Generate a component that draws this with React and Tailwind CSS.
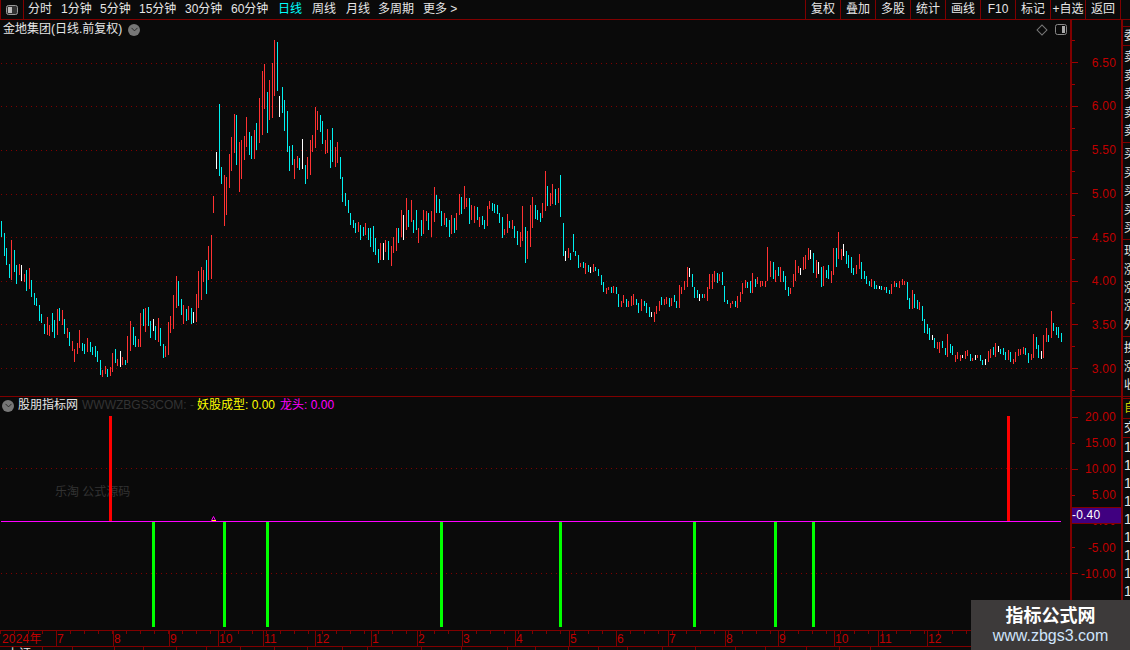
import { ChevronDown } from "lucide-react";

const FONT = "[font-family:'Liberation_Sans','Noto_Sans_CJK_SC',sans-serif]";
const COLORS = { c: "#00f0f0", r: "#ff3232", w: "#ffffff" };

// bars read off the chart in 3x crops: "x,top,bottom,colour"
const CROPS = [
  [0, 215, "3,18,66,c 13,54,123,c 18,99,150,c 28,147,189,c 33,75,195,r 43,105,171,c 48,150,207,c 58,147,180,r 63,150,198,w 73,177,201,r 78,165,228,c 88,159,222,r 93,195,246,c 103,234,270,c 108,249,273,c 118,270,318,c 123,297,324,c 133,327,357,c 142,306,360,r 148,330,363,r 157,294,351,c 163,315,369,c 172,282,360,r 178,279,318,c 187,285,330,r 193,312,357,c 202,339,369,r 208,351,393,c 217,378,408,r 223,402,441,r 232,384,417,r 238,345,399,r 247,384,408,c 253,387,417,c 262,369,411,r 271,381,411,c 277,396,420,c 286,393,426,c 292,408,441,c 301,435,480,c 307,465,486,r 316,453,477,r 322,462,486,c 331,456,483,r 337,414,471,r 346,402,444,c 352,432,453,r 361,408,456,w 367,426,450,r 376,435,450,c 382,363,444,r 391,318,408,r 400,336,390,c 406,363,396,c 415,372,396,r 421,294,396,r 430,282,333,c 436,279,351,r 445,276,333,c 451,318,369,c 460,312,348,w 466,333,375,c 475,309,381,r 481,339,393,c 490,387,429,c 496,393,426,r 505,321,420,r 511,303,354,r 520,240,342,r 529,183,279,r 535,198,273,c 544,252,300,c 550,270,327,r 559,282,318,c 565,273,315,r 574,279,327,c 580,291,324,w 589,237,321,r 595,168,279,r 604,156,255,r 610,165,201,r 619,135,237,c 625,93,195,r 634,60,192,r"],
  [200, 35, "40,483,534,r 49,351,402,w 58,207,423,c 64,396,447,c 73,420,573,r 79,426,540,r 88,357,459,r 94,306,408,r 103,237,354,r 109,240,390,c 118,321,471,r 124,315,432,r 133,303,375,r 139,246,336,r 148,291,360,c 154,303,372,c 163,285,372,r 169,264,345,c 178,189,324,r 187,108,300,r 193,87,222,r 202,171,294,c 208,135,255,r 217,84,249,r 223,15,183,r 232,21,168,c 238,183,246,w 247,156,234,c 253,195,288,c 262,228,351,c 268,333,408,c 277,330,390,c 283,372,432,r 292,363,399,r 298,369,405,c 307,312,402,w 316,390,447,c 322,366,432,r 331,315,420,r 337,300,351,r 346,216,339,r 352,228,285,r 361,240,291,c 367,258,327,c 376,315,357,r 382,282,354,r 391,315,399,c 397,279,381,c 406,336,396,r 412,321,384,r 421,366,432,c 427,426,501,c 436,474,513,c 445,495,534,c 451,534,570,c 460,555,579,c 466,564,594,c 475,561,591,r"],
  [240, 165, "361,180,225,c 370,186,213,c 376,174,210,r 385,189,225,c 391,189,246,c 400,183,261,c 406,219,270,c 415,252,294,c 421,234,285,r 430,234,285,w 436,225,261,r 445,228,285,c 454,243,303,r 460,216,264,r 469,189,258,r 475,189,234,c 484,135,216,r 490,150,225,w 499,99,195,r 505,135,186,c 514,105,171,r 520,165,204,c 529,135,195,c 535,189,234,r 544,165,213,c 550,135,207,r 559,138,168,r 565,144,195,c 574,138,216,r 583,66,171,r 589,90,144,c 598,102,144,c 604,138,183,c 613,144,180,r 619,159,186,c 628,165,216,c 634,150,207,r 643,159,204,c 649,144,195,r 658,87,150,r 664,96,147,c 673,63,132,r 679,99,126,r 688,99,177,c 694,120,165,r 703,123,174,r 712,126,165,c 718,156,186,r 727,153,180,c 733,165,192,c 742,123,183,r 748,108,132,r 757,114,138,c 763,117,144,c 772,120,147,c 778,144,174,c 787,156,219,c 793,192,210,r 802,147,204,r 808,168,189,c 817,165,192,r 823,183,219,c 832,198,240,c 841,201,246,r 847,123,228,r 856,186,294,c 862,198,282,r 871,120,246,r 877,96,189,r 886,120,162,c 892,135,165,c 901,144,171,c 907,114,159,r 916,18,138,r 922,63,123,c 931,84,123,r 937,57,117,r 946,72,120,c 955,69,114,r 961,30,156,c 970,174,273,c 976,258,288,w 985,249,279,r"],
  [555, 220, "46,99,120,c 55,42,96,c 61,93,108,c 70,105,144,c 76,129,141,r 85,126,144,c 91,129,162,r 100,135,156,c 106,141,159,w 115,132,156,r 121,141,153,c 130,147,168,c 139,165,195,c 145,186,216,c 154,204,222,r 160,201,210,r 169,201,219,c 175,198,219,r 184,201,222,c 190,222,261,c 199,243,261,r 205,225,249,r 214,237,261,c 220,243,261,r 229,228,258,r 235,222,255,r 244,237,255,c 250,249,279,c 259,237,273,r 268,243,258,c 274,249,279,c 283,261,291,c 289,276,291,w 298,276,306,r 304,258,282,r 313,243,273,r 319,231,255,c 328,237,255,r 334,231,252,r 343,234,261,c 349,234,258,r 358,225,246,c 364,243,264,c 373,195,264,r 379,201,222,r 388,183,210,r 397,141,201,r 403,144,171,w 412,162,201,c 418,201,234,c 427,210,234,c 433,222,243,w 442,222,234,c 448,222,234,r 457,201,243,r 463,162,207,r 472,162,207,r 478,153,186,r 487,159,189,c 493,162,183,r 502,156,195,c 508,198,246,c 517,240,252,c 526,249,264,r 532,243,252,r 541,243,261,c 547,228,264,r 556,216,246,r 562,189,222,r 571,180,204,r 577,186,204,c 586,183,219,c 592,159,219,r 601,177,201,c 607,171,192,r 616,183,201,r 622,183,198,r 631,183,201,r 637,81,183,r 646,123,171,r 655,126,177,c 661,150,186,r 670,141,168,c 676,141,186,r 685,153,186,c 691,168,210,c 700,201,228,c 706,204,222,r 715,162,201,r 721,120,183,r 730,138,159,r 736,144,165,w 745,111,150,r 751,105,147,r 760,84,120,r 766,90,117,w 775,99,159,c"],
  [800, 225, "49,105,159,r 55,111,147,w 64,126,186,c 70,123,183,r 79,135,159,c 85,120,162,c 94,138,174,r 100,69,150,r 109,69,126,c 115,21,102,r 124,72,105,r 130,57,93,w 139,78,117,c 145,90,129,c 154,96,144,c 160,129,150,c 169,120,147,r 178,87,132,r 184,111,162,c 193,138,162,c 199,153,177,c 208,168,183,c 214,162,186,r 223,168,192,c 229,180,192,c 238,183,192,w 244,183,195,c 253,186,195,r 259,186,204,c 268,195,207,c 274,177,207,r 283,168,186,r 289,174,186,c 298,168,189,r 307,162,180,r 313,168,180,r 322,171,225,c 328,219,252,c 337,195,252,r 343,207,249,c 352,225,252,c 358,231,255,r 367,243,288,c 373,282,324,c 382,297,327,c 388,309,345,c 397,330,345,w 403,339,369,c 412,351,372,r 418,351,384,r 427,348,369,c 436,369,390,c 442,327,396,r 451,357,384,c 457,363,390,c 466,390,411,r 472,381,402,r 481,390,408,r 487,390,399,w 496,378,402,r 502,375,393,r 511,387,408,c 517,399,408,r 526,390,405,w 532,390,399,r 541,390,408,c 547,405,420,c 556,402,420,w 565,378,411,r 571,372,399,r 580,366,390,c 586,354,396,r 595,363,381,w 601,372,387,c 610,369,390,c 616,381,405,c 625,375,405,r 631,381,411,c 640,402,417,r 646,381,411,r 655,372,393,r 661,372,390,r 670,366,387,r 676,369,390,c 685,384,414,c 694,387,405,r 700,327,399,r 709,336,372,c 715,360,399,c 724,378,402,w 730,330,399,r 739,309,351,r 745,330,351,c 754,258,339,r 760,294,318,c 769,306,330,c 775,306,339,c 784,324,351,c"],
];

const BARS = CROPS.flatMap(([x0, y0, s]) =>
  s.split(" ").map((item) => {
    const [x, top, bottom, c] = item.split(",");
    return {
      x: Math.floor(x0 + Number(x) / 3),
      y: Math.round(y0 + Number(top) / 3),
      h: Math.round((Number(bottom) - Number(top)) / 3),
      color: COLORS[c],
    };
  })
);

const PRICE_LINES = [63, 106.5, 150.5, 194, 237, 281, 324, 368];
const GREEN_BARS = [152, 223, 266, 440, 559, 693, 774, 812];
const RED_BARS = [109, 1007];
const TOOLS = [
  ["分时", "w-[33px]"],
  ["1分钟", "w-[39px]"],
  ["5分钟", "w-[39px]"],
  ["15分钟", "w-[46px]"],
  ["30分钟", "w-[46px]"],
  ["60分钟", "w-[47px]"],
  ["日线", "w-[34px] text-[#00ffff]"],
  ["周线", "w-[34px]"],
  ["月线", "w-[32px]"],
  ["多周期", "w-[45px]"],
  ["更多 >", "w-[40px]"],
];
const ACTIONS = ["复权", "叠加", "多股", "统计", "画线", "F10", "标记", "+自选", "返回"];
const MONTHS = [
  ["2024年", "w-[57px] pl-[2px]"], ["7", "w-[57px]"], ["8", "w-[56px]"], ["9", "w-[49px]"],
  ["10", "w-[45px]"], ["11", "w-[52px]"], ["12", "w-[56px]"], ["1", "w-[46px]"],
  ["2", "w-[45px]"], ["3", "w-[53px]"], ["4", "w-[54px]"], ["5", "w-[47px]"],
  ["6", "w-[52px]"], ["7", "w-[57px]"], ["8", "w-[53px]"], ["9", "w-[56px]"],
  ["10", "w-[44px]"], ["11", "w-[49px]"], ["12", "w-[142px]"],
];
const STATUS = [
  ["上证", "w-[43px]"], ["", "w-[30px]"], ["", "w-[42px]"], ["", "w-[29px]"],
  ["", "w-[33px]"], ["", "w-[30px]"], ["", "w-[34px]"], ["", "w-[34px]"],
  ["", "w-[33px]"], ["", "w-[35px]"], ["", "w-[25px]"], ["", "w-[54px]"],
  ["", "w-[40px]"], ["", "w-[46px]"], ["", "w-[28px]"], ["", "w-[33px]"],
  ["", "w-[30px]"], ["", "w-[29px]"], ["", "w-[35px]"], ["", "w-[33px]"],
  ["", "w-[40px]"], ["", "w-[30px]"], ["", "w-[41px]"], ["", "w-[33px]"],
  ["", "w-[31px]"],
];

function CircleChevron() {
  return (
    <span className="flex h-[12px] w-[12px] items-center justify-center rounded-full bg-[#777777]">
      <ChevronDown size={11} strokeWidth={2} className="text-[#222222]" />
    </span>
  );
}

function PanelIcon({ className }) {
  return (
    <svg width="12" height="11" viewBox="0 0 12 11" className={className}>
      <rect x="0.5" y="0.5" width="11" height="10" rx="2" fill="none" stroke="#888888" />
      <rect x="7" y="2" width="3" height="7" fill="#aaaaaa" />
    </svg>
  );
}

function AxisRows({ rows, rowClass, className }) {
  return (
    <div className={className}>
      {rows.map(([label, long], i) => (
        <div key={i} className={`flex items-center ${rowClass}`}>
          <span className={`h-px bg-[#a00000] ${long ? "w-[6px]" : "w-[3px]"}`} />
          <span className="ml-auto pr-[5px] text-[12px] leading-none tracking-[0.2px] text-[#c00000]">
            {label}
          </span>
        </div>
      ))}
    </div>
  );
}

function StripBlock({ chars, className = "" }) {
  return (
    <div className={`border-b border-[#800000] text-[12px] leading-[18px] whitespace-nowrap ${className}`}>
      {chars.map((c, i) => (
        <div key={i} className="h-[18.4px] pl-[1px]">{c}</div>
      ))}
    </div>
  );
}

export default function App() {
  const priceRows = ["", "6.50", "", "6.00", "", "5.50", "", "5.00", "", "4.50", "", "4.00", "", "3.50", "", "3.00", ""];
  return (
    <div className={`relative h-[650px] w-[1130px] overflow-hidden bg-[#0a0a0a] text-[#e6e6e6] ${FONT}`}>
      {/* toolbar */}
      <div className="flex h-[20px] border-b border-[#800000] text-[12px] leading-[19px]">
        <div className="flex w-[24px] shrink-0 items-center justify-center border-x border-[#800000]">
          <svg width="12" height="10" viewBox="0 0 12 10">
            <rect x="0.5" y="0.5" width="11" height="9" rx="2" fill="#333333" stroke="#999999" />
            <rect x="2" y="2" width="4" height="6" fill="#bbbbbb" />
          </svg>
        </div>
        <div className="flex pl-[4px]">
          {TOOLS.map(([label, cls]) => (
            <span key={label} className={`whitespace-nowrap ${cls}`}>{label}</span>
          ))}
        </div>
        <div className="ml-auto flex w-[316px] border-l border-[#800000]">
          {ACTIONS.map((a) => (
            <span key={a} className="w-[35px] border-r border-[#800000] text-center whitespace-nowrap">{a}</span>
          ))}
        </div>
        <div className="w-[9px]" />
      </div>

      <div className="flex">
        <div className="w-[1121px] shrink-0">
          {/* price panel */}
          <div className="flex h-[377px] border-b border-[#800000]">
            <div className="relative w-[1070px] shrink-0">
              <div className="absolute left-[3px] top-[1px] flex items-center gap-[6px] text-[12px] leading-[17px]">
                <span>金地集团(日线.前复权)</span>
                <CircleChevron />
              </div>
              <div className="absolute left-[1038px] top-[4px] flex items-center gap-[9px]">
                <span className="h-[8px] w-[8px] rotate-45 border border-[#777777]" />
                <PanelIcon />
              </div>
              <svg width="1070" height="376" viewBox="0 20 1070 376" className="block">
                {PRICE_LINES.map((y) => (
                  <line key={y} x1="1" x2="1067" y1={Math.floor(y) + 0.5} y2={Math.floor(y) + 0.5} stroke="#800000" strokeDasharray="1 4" />
                ))}
                {BARS.map((b, i) => (
                  <rect key={i} x={b.x} y={b.y} width="1" height={b.h} fill={b.color} shapeRendering="crispEdges" />
                ))}
              </svg>
            </div>
            <AxisRows
              className="w-[51px] border-l-2 border-[#800000] pt-[10px]"
              rowClass="h-[21.85px]"
              rows={priceRows.map((l, i) => [l, i % 2 === 1])}
            />
          </div>

          {/* indicator panel */}
          <div className="flex h-[233px]">
            <div className="relative w-[1070px] shrink-0">
              <div className="absolute left-[2px] top-[1px] flex items-center text-[12px] leading-[15px] whitespace-nowrap">
                <CircleChevron />
                <span className="ml-[4px]">股朋指标网</span>
                <span className="ml-[4px] text-[#333333]">WWWZBGS3COM: -</span>
                <span className="ml-[3px] text-[#ffff00]">妖股成型: 0.00</span>
                <span className="ml-[5px] text-[#ff00ff]">龙头: 0.00</span>
              </div>
              <span className="absolute left-[55px] top-[87px] text-[12px] leading-[16px] text-[#333333]">乐淘 公式源码</span>
              <svg width="1070" height="233" viewBox="0 397 1070 233" className="relative block">
                <line x1="1" x2="1067" y1="468.5" y2="468.5" stroke="#800000" strokeDasharray="1 4" />
                <line x1="1" x2="1067" y1="573.5" y2="573.5" stroke="#800000" strokeDasharray="1 4" />
                {RED_BARS.map((x) => (
                  <rect key={x} x={x} y="416" width="3" height="105" fill="#ff0000" />
                ))}
                {GREEN_BARS.map((x) => (
                  <rect key={x} x={x} y="522" width="3" height="105" fill="#00ff00" />
                ))}
                <rect x="1" y="521" width="1060" height="1" fill="#ff00ff" />
                <path d="M211.5 520.5 L213.5 516.5 L215.5 520.5 Z" fill="none" stroke="#ff00ff" />
                <rect x="212" y="520" width="4" height="1" fill="#ffff00" />
              </svg>
            </div>
            <div className="relative w-[51px] border-l-2 border-[#800000]">
              <AxisRows
                className="pt-[7px]"
                rowClass="h-[26.1px]"
                rows={[["20.00", true], ["15.00", false], ["10.00", true], ["5.00", false], ["0.00", true], ["-5.00", false], ["-10.00", true]]}
              />
              <div className="absolute inset-x-0 top-[110px] h-[17px] border-y border-[#800000] bg-[#400080] text-[12px] leading-[15px] tracking-[0.2px] text-white">
                -0.40
              </div>
            </div>
          </div>

          {/* time axis */}
          <div className="relative flex h-[17px] border-y border-[#800000] text-[12px] leading-[16px] tracking-[0.2px] text-[#c00000]">
            <div className="absolute inset-x-0 top-0 h-[3px] bg-[repeating-linear-gradient(90deg,#800000_0_1px,transparent_1px_14px)]" />
            {MONTHS.map(([label, cls], i) => (
              <span key={i} className={`shrink-0 border-r border-[#800000] whitespace-nowrap ${cls}`}>{label}</span>
            ))}
          </div>
        </div>

        {/* clipped right column */}
        <div className="h-[627px] w-[9px] shrink-0 overflow-hidden border-l-2 border-[#800000] pt-[6px]">
          <StripBlock chars={["委"]} className="border-t" />
          <StripBlock chars={["卖", "卖", "卖", "卖", "卖"]} className="py-[2px]" />
          <StripBlock chars={["买", "买", "买", "买", "买"]} className="py-[2px]" />
          <StripBlock chars={["现", "涨", "涨", "涨", "外"]} className="py-[2px]" />
          <StripBlock chars={["换", "涨", "收"]} className="mb-[1px] py-[2px]" />
          <StripBlock chars={["自"]} className="border-t text-[#cccc00]" />
          <StripBlock chars={["交"]} />
          <div className="text-[14px] leading-[18px]">
            {Array.from({ length: 12 }, (_, i) => (
              <div key={i} className="pl-[1px]">1</div>
            ))}
          </div>
        </div>
      </div>

      {/* status row, only its top edge fits in the window */}
      <div className="flex h-[3px] overflow-hidden text-[12px] leading-[14px]">
        {STATUS.map(([label, cls], i) => (
          <span key={i} className={`shrink-0 border-r border-[#800000] pl-[7px] whitespace-nowrap ${cls}`}>{label}</span>
        ))}
      </div>

      {/* site watermark */}
      <div className="absolute left-[971px] top-[600px] flex h-[50px] w-[159px] flex-col items-center bg-[#3d3a3a] pt-[5px]">
        <span className="text-[18px] leading-[22px] font-bold text-white">指标公式网</span>
        <span className="text-[16px] leading-[18px] text-[#cfe4fa]">www.zbgs3.com</span>
      </div>
    </div>
  );
}
